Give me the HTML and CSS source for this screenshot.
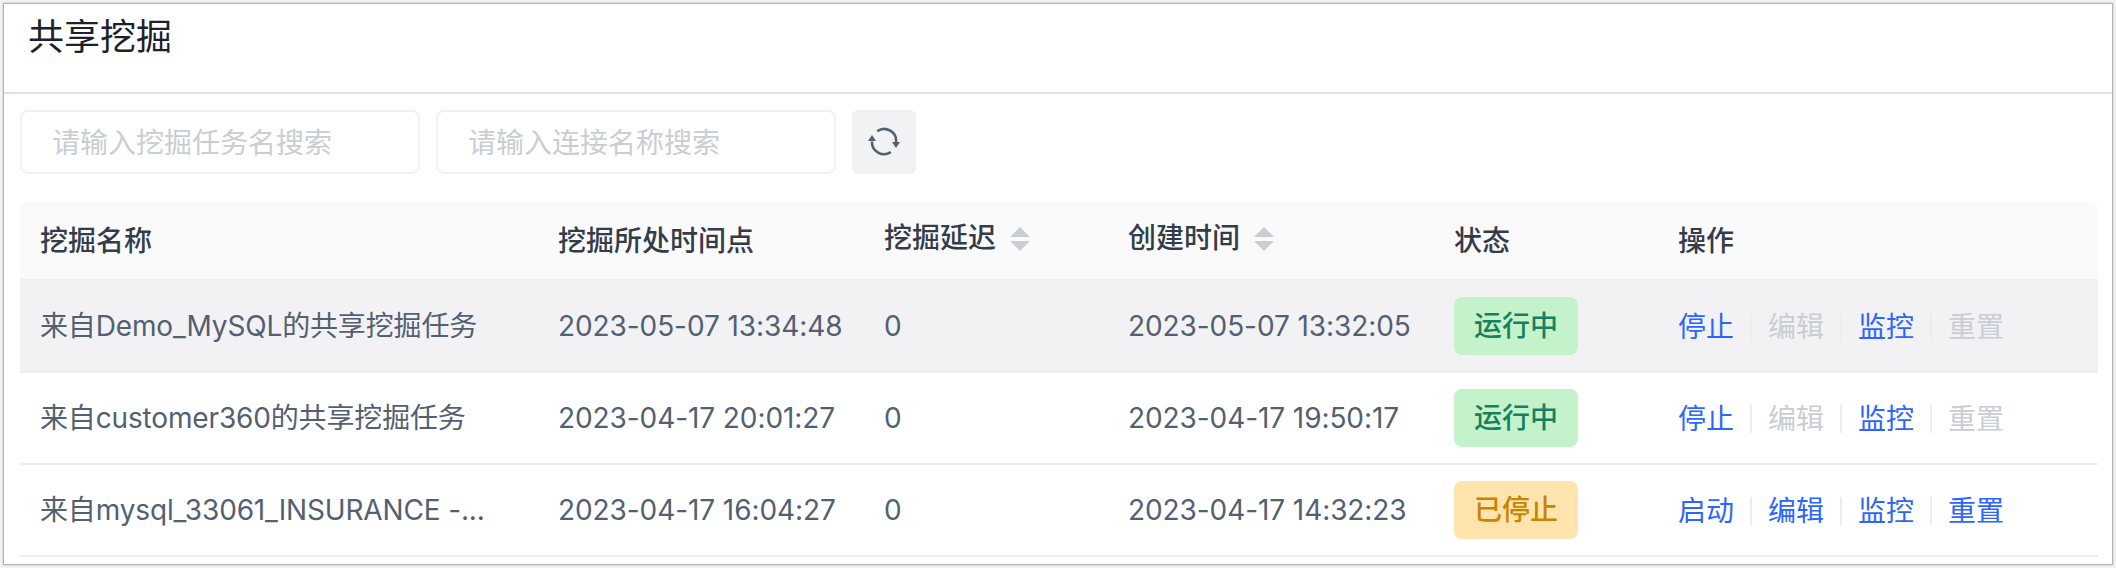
FILE: index.html
```html
<!DOCTYPE html>
<html lang="zh-CN">
<head>
<meta charset="utf-8">
<title>共享挖掘</title>
<link rel="stylesheet" href="styles.css">
</head>
<body>
<main class="panel">
  <header class="panel-header"><h1 class="title">共享挖掘</h1></header>
  <section class="content">
    <div class="filters">
      <input class="search" type="text" placeholder="请输入挖掘任务名搜索">
      <input class="search" type="text" placeholder="请输入连接名称搜索">
      <button class="refresh" type="button" aria-label="刷新">
        <svg class="refresh-icon" viewBox="0 0 32 32">
          <path class="arc" d="M9.2 5.2A12 12 0 0 1 28 16.5M22.8 26A12 12 0 0 1 4 15.5"/>
          <path class="tip" d="M24 16h8l-4 6zM0 15h8l-4-6z"/>
        </svg>
      </button>
    </div>
    <div class="table">
      <div class="row head">
        <div class="cell">挖掘名称</div>
        <div class="cell">挖掘所处时间点</div>
        <div class="cell sortable">挖掘延迟<svg class="sort" viewBox="0 0 20 24"><path d="M10 0L20 10H0zM0 14H20L10 24z"/></svg></div>
        <div class="cell sortable">创建时间<svg class="sort" viewBox="0 0 20 24"><path d="M10 0L20 10H0zM0 14H20L10 24z"/></svg></div>
        <div class="cell">状态</div>
        <div class="cell">操作</div>
      </div>
      <div class="row active">
        <div class="cell name">来自Demo_MySQL的共享挖掘任务</div>
        <div class="cell date">2023-05-07 13:34:48</div>
        <div class="cell">0</div>
        <div class="cell date">2023-05-07 13:32:05</div>
        <div class="cell"><span class="tag running">运行中</span></div>
        <div class="cell actions"><a class="action">停止</a><a class="action disabled">编辑</a><a class="action">监控</a><a class="action disabled">重置</a></div>
      </div>
      <div class="row">
        <div class="cell name">来自customer360的共享挖掘任务</div>
        <div class="cell date">2023-04-17 20:01:27</div>
        <div class="cell">0</div>
        <div class="cell date">2023-04-17 19:50:17</div>
        <div class="cell"><span class="tag running">运行中</span></div>
        <div class="cell actions"><a class="action">停止</a><a class="action disabled">编辑</a><a class="action">监控</a><a class="action disabled">重置</a></div>
      </div>
      <div class="row">
        <div class="cell name">来自mysql_33061_INSURANCE -...</div>
        <div class="cell date">2023-04-17 16:04:27</div>
        <div class="cell">0</div>
        <div class="cell date">2023-04-17 14:32:23</div>
        <div class="cell"><span class="tag stopped">已停止</span></div>
        <div class="cell actions"><a class="action">启动</a><a class="action">编辑</a><a class="action">监控</a><a class="action">重置</a></div>
      </div>
    </div>
  </section>
</main>
</body>
</html>
```
FILE: styles.css
```css
* { box-sizing: border-box; }
body {
  margin: 0;
  padding: 4px;
  height: 568px;
  overflow: hidden;
  background: #f3f3f3;
  font-family: Inter, "Noto Sans CJK SC", sans-serif;
  font-size: 28px;
  color: #535f72;
}
.panel {
  height: 560px;
  background: #fff;
  box-shadow: 0 0 0 1px #b4b4b4, 0 0 2px 1px #bbb;
}
.panel-header {
  height: 90px;
  padding: 7px 24px;
  border-bottom: 2px solid #dde2e8;
}
.title {
  margin: 0;
  font-size: 36px;
  line-height: 52px;
  font-weight: 400;
  color: #1d2129;
}
.content { padding: 16px 14px 0 16px; }
.filters { display: flex; gap: 16px; margin-bottom: 27px; }
.search {
  width: 400px;
  height: 64px;
  padding: 1px 30px 0;
  border: 2px solid #f2f2f2;
  border-radius: 8px;
  background: #fff;
  font: inherit;
}
.search::placeholder { color: #c9cdd4; opacity: 1; }
.refresh {
  display: flex;
  align-items: center;
  justify-content: center;
  width: 64px;
  height: 64px;
  padding: 0;
  border: 0;
  border-radius: 6px;
  background: #f2f2f5;
}
.refresh-icon { width: 32px; height: 32px; }
.arc { fill: none; stroke: #535f72; stroke-width: 2.6; }
.tip { fill: #535f72; }
.row {
  display: grid;
  grid-template-columns: 518px 326px 244px 326px 224px 1fr;
  align-items: center;
  height: 92px;
  padding-left: 20px;
  border-bottom: 2px solid #ebeef5;
}
.head {
  height: 80px;
  background: #fafafa;
  border-radius: 8px 8px 0 0;
  font-weight: 500;
  color: #333c4a;
}
.head .cell { padding-top: 1px; }
.active { background: #f2f2f5; }
.cell { display: flex; align-items: center; white-space: nowrap; line-height: 40px; }
.name { letter-spacing: -0.15px; }
.date { letter-spacing: -0.08px; }
.head .sortable { gap: 14px; padding: 0 0 5px; }
.sort { width: 20px; height: 24px; margin-top: 3px; fill: #c9cdd4; }
.tag {
  width: 124px;
  height: 58px;
  line-height: 58px;
  text-align: center;
  border-radius: 8px;
  font-weight: 500;
}
.running { background: #c4f3cb; color: #178061; }
.stopped { background: #ffe4ae; color: #c88500; }
.actions { padding-top: 2px; }
.action { display: flex; align-items: center; color: #2c65ff; }
.action + .action::before {
  content: "";
  width: 2px;
  height: 28px;
  margin: 0 16px;
  background: #ededf0;
}
.disabled { color: #c9cdd4; }
```
